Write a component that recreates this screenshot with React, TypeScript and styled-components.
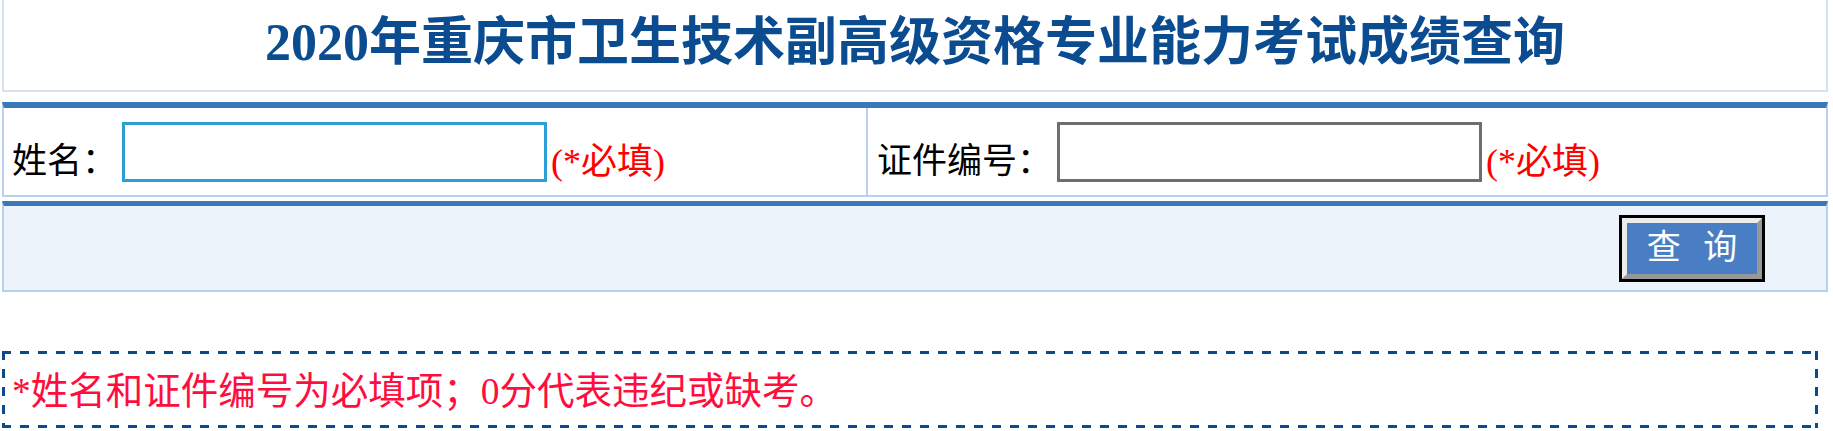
import React from "react";
import styled, { createGlobalStyle } from "styled-components";

const GlobalStyle = createGlobalStyle`
  html, body {
    margin: 0;
    padding: 0;
    background: #ffffff;
  }
  body {
    font-family: "Liberation Serif", "Noto Sans CJK SC", serif;
  }
  * { box-sizing: border-box; }
`;

const Page = styled.div`
  display: flex;
  flex-direction: column;
  align-items: flex-start;
  padding: 0 5px 0 2px;
  width: 1833px;
`;

const Header = styled.div`
  width: 1826px;
  height: 92px;
  border: 2px solid #d6e2f1;
  border-top: none;
  display: flex;
  align-items: center;
  justify-content: center;
`;

const Title = styled.h1`
  margin: 0;
  font-family: "Liberation Serif", "Noto Sans CJK SC", serif;
  font-size: 52px;
  font-weight: 700;
  line-height: 1;
  color: #0b4c91;
  padding-bottom: 4px;
`;

const FormPanel = styled.div`
  margin-top: 10px;
  width: 1826px;
  height: 95px;
  display: grid;
  grid-template-columns: 862px 1fr;
  border: 2px solid #b8d0f0;
  border-top: 6px solid #3a78b9;
`;

const FieldCell = styled.div<{ $divider?: boolean }>`
  display: flex;
  align-items: center;
  padding-left: ${(p) => (p.$divider ? "9px" : "8px")};
  border-left: ${(p) => (p.$divider ? "2px solid #b8d0f0" : "none")};
`;

const Label = styled.span`
  font-size: 35px;
  color: #000000;
  white-space: nowrap;
  padding-top: 12px;
`;

const TextInput = styled.input<{ $tone: "blue" | "gray" }>`
  width: 425px;
  height: 60px;
  margin-left: 5px;
  border: 3px solid ${(p) => (p.$tone === "blue" ? "#2c9ed8" : "#6e6e6e")};
  background: #ffffff;
  outline: none;
  font-size: 28px;
  padding: 0 6px;
`;

const Required = styled.span`
  margin-left: 4px;
  font-size: 36px;
  color: #ff0000;
  white-space: nowrap;
  padding-top: 12px;
`;

const ActionPanel = styled.div`
  margin-top: 4px;
  width: 1826px;
  height: 91px;
  background: #ecf3fb;
  border: 2px solid #b8d0f0;
  border-top: 5px solid #3a78b9;
  display: flex;
  align-items: center;
  justify-content: flex-end;
  padding-right: 61px;
`;

const ButtonFrame = styled.div`
  border: 3px solid #000000;
  display: flex;
`;

const QueryButton = styled.button`
  width: 140px;
  height: 61px;
  border-style: solid;
  border-width: 5px;
  border-color: #ececec #989898 #989898 #ececec;
  background: #4a7ec4;
  color: #ffffff;
  font-family: "Liberation Serif", "Noto Sans CJK SC", serif;
  font-size: 34px;
  line-height: 1;
  letter-spacing: 7px;
  padding: 0 0 0 7px;
  cursor: pointer;
`;

const dash = "#0b4a8c";

const Notice = styled.div`
  margin-top: 59px;
  width: 1816px;
  height: 77px;
  display: flex;
  align-items: center;
  padding: 0 0 0 10px;
  background:
    repeating-linear-gradient(90deg, ${dash} 0 9px, transparent 9px 18px) left top / 100% 3px no-repeat,
    repeating-linear-gradient(90deg, ${dash} 0 9px, transparent 9px 18px) left bottom / 100% 3px no-repeat,
    repeating-linear-gradient(180deg, ${dash} 0 9px, transparent 9px 18px) left top / 3px 100% no-repeat,
    repeating-linear-gradient(180deg, ${dash} 0 9px, transparent 9px 18px) right top / 3px 100% no-repeat;
`;

const NoticeText = styled.p`
  margin: 0;
  font-size: 37.5px;
  line-height: 1;
  color: #ff0d3d;
  white-space: nowrap;
  padding-top: 4px;
`;

export default function App() {
  return (
    <>
      <GlobalStyle />
      <Page>
        <Header>
          <Title>2020年重庆市卫生技术副高级资格专业能力考试成绩查询</Title>
        </Header>
        <FormPanel>
          <FieldCell>
            <Label>姓名：</Label>
            <TextInput $tone="blue" type="text" />
            <Required>(*必填)</Required>
          </FieldCell>
          <FieldCell $divider>
            <Label>证件编号：</Label>
            <TextInput $tone="gray" type="text" />
            <Required>(*必填)</Required>
          </FieldCell>
        </FormPanel>
        <ActionPanel>
          <ButtonFrame>
            <QueryButton type="button">查 询</QueryButton>
          </ButtonFrame>
        </ActionPanel>
        <Notice>
          <NoticeText>*姓名和证件编号为必填项；0分代表违纪或缺考。</NoticeText>
        </Notice>
      </Page>
    </>
  );
}
